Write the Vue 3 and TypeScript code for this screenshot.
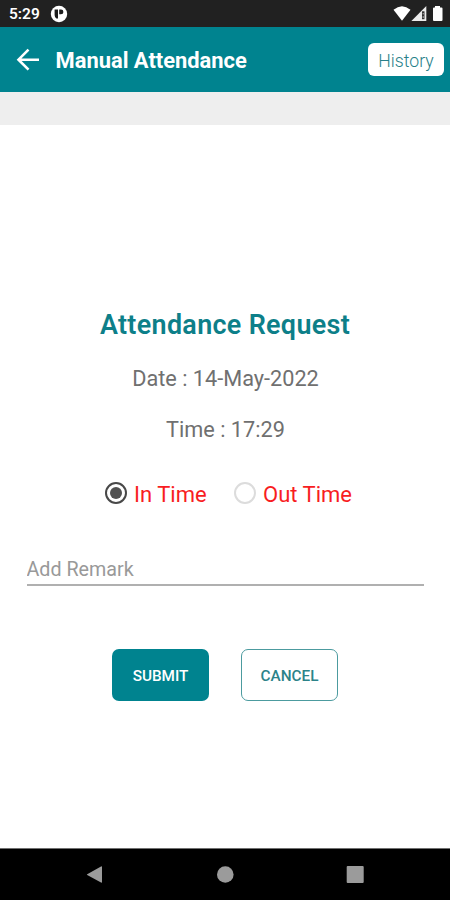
<script setup lang="ts">
import { ref } from 'vue'

type Kind = 'in' | 'out'

const selected = ref<Kind>('in')
const remark = ref<string>('')
const options: { value: Kind; label: string }[] = [
  { value: 'in', label: 'In Time' },
  { value: 'out', label: 'Out Time' },
]
</script>

<template>
  <div class="screen">
    <div class="status">
      <span class="clock">5:29</span>
      <svg class="app-mark" width="18" height="18" viewBox="0 0 18 18">
        <circle cx="9" cy="9" r="8.200" fill="#fff" />
        <path d="M4.600 4.500h3.400v9H6.400Q4.600 12 4.600 10z M9.200 4.500h1.800a2.400 2.400 0 0 1 0 4.800H9.200z" fill="#1c1c1c" />
      </svg>
      <svg class="signals" width="52" height="18" viewBox="0 0 52 18">
        <path d="M.5 4.800Q9 -2.200 17.500 4.800L9 15.800Z" fill="#fff" />
        <path d="M33.300 1V16H18.400Z" fill="#ececec" />
        <path d="M29 6.300h2.500v7.900H29z" fill="#333" />
        <path d="M30.200 8v1.400M30.200 11.200v1.700" stroke="#ddd" stroke-width=".8" />
        <path d="M42 1h5v1.500h1.500q1 0 1 1V15q0 1-1 1h-7.500q-1 0-1-1V3.500q0-1 1-1H42z" fill="#fff" />
      </svg>
    </div>

    <header class="toolbar">
      <svg class="back" width="24" height="24" viewBox="0 0 24 24" fill="none" stroke="#fff" stroke-width="2.600">
        <path d="M23 11.700H2.500M12.500 1.700L2.500 11.700l10 10" />
      </svg>
      <h1>Manual Attendance</h1>
      <button class="history" type="button">History</button>
    </header>
    <div class="strip"></div>

    <main>
      <h2>Attendance Request</h2>
      <p class="date">Date : 14-May-2022</p>
      <p class="time">Time : 17:29</p>

      <div class="radios" role="radiogroup">
        <div
          v-for="o in options"
          :key="o.value"
          class="option"
          role="radio"
          :aria-checked="selected === o.value"
          @click="selected = o.value"
        >
          <span class="ring" :class="{ on: selected === o.value }"></span>
          <span :class="['label', o.value]">{{ o.label }}</span>
        </div>
      </div>

      <input v-model="remark" class="remark" type="text" placeholder="Add Remark" />

      <div class="actions">
        <button class="submit" type="button"><span>SUBMIT</span></button>
        <button class="cancel" type="button"><span>CANCEL</span></button>
      </div>
    </main>

    <nav>
      <svg width="18" height="20" viewBox="0 0 18 20"><path d="M1.200 9.200L15 1.500q1-.5 1 .6v14.800q0 1.100-1 .6L1.200 10.100q-.7-.45 0-.9z" fill="#9b9b9b" /></svg>
      <svg width="18" height="20" viewBox="0 0 18 20"><circle cx="9.300" cy="9.500" r="8.300" fill="#9b9b9b" /></svg>
      <svg width="18" height="20" viewBox="0 0 18 20"><rect x=".7" y="1" width="17" height="17" rx="1" fill="#9b9b9b" /></svg>
    </nav>
  </div>
</template>

<style>
body {
  margin: 0;
}
</style>

<style scoped>
.screen {
  width: 450px;
  height: 900px;
  display: flex;
  flex-direction: column;
  background: #fff;
  font-family: Roboto, "Liberation Sans", sans-serif;
  overflow: hidden;
}
.status {
  height: 27px;
  flex: none;
  display: flex;
  align-items: center;
  box-sizing: border-box;
  padding: 1px 0 0 9px;
  background: #212121;
  color: #fff;
}
.clock {
  width: 41px;
  font-size: 15.500px;
  font-weight: 600;
  line-height: 20px;
}
.signals {
  margin-left: auto;
  margin-right: 5px;
}
.toolbar {
  height: 65px;
  flex: none;
  display: flex;
  align-items: center;
  box-sizing: border-box;
  padding: 0 6px 0 16px;
  background: #00838f;
}
h1 {
  margin: 2px 0 0 15.500px;
  color: #fff;
  font-size: 21.900px;
  line-height: 28px;
  font-weight: 700;
  white-space: nowrap;
}
button {
  box-sizing: border-box;
  padding: 0;
  border: 0;
  font-family: inherit;
}
.history {
  width: 76px;
  height: 33px;
  margin-left: auto;
  border-radius: 6px;
  background: #fff;
  color: #287f89;
  font-size: 17.700px;
  font-weight: 300;
  padding-top: 2px;
}
.strip {
  height: 33px;
  flex: none;
  background: #eee;
}
main {
  flex: 1;
  min-height: 0;
  display: flex;
  flex-direction: column;
  align-items: center;
}
h2 {
  margin: 184px 0 0;
  color: #0d7f89;
  font-size: 26.900px;
  line-height: 32px;
  font-weight: 600;
  letter-spacing: 0.330px;
}
p {
  margin: 0 0 0 1px;
  color: #707070;
  font-size: 21.700px;
  line-height: 26px;
  font-weight: 400;
}
.date {
  margin-top: 25px;
}
.time {
  margin-top: 25px;
}
.radios {
  width: 247px;
  margin-top: 38px;
  margin-left: 7px;
  height: 26px;
  display: flex;
  justify-content: space-between;
}
.option {
  display: flex;
  align-items: center;
  gap: 7px;
}
.ring {
  width: 22px;
  height: 22px;
  box-sizing: border-box;
  display: flex;
  align-items: center;
  justify-content: center;
  border: 2px solid #dcdcdc;
  border-radius: 50%;
  margin-bottom: 2px;
}
.ring.on {
  border-color: #484848;
}
.ring.on::after {
  content: "";
  width: 12px;
  height: 12px;
  border-radius: 50%;
  background: #505050;
}
.label {
  color: #f81d22;
  font-size: 22px;
  line-height: 26px;
  padding-top: 2px;
}
.remark {
  box-sizing: border-box;
  width: 397px;
  height: 40px;
  margin-top: 39px;
  padding: 8px 0 0;
  border: 0;
  border-bottom: 2px solid #b0b0b0;
  outline: 0;
  background: transparent;
  font-family: inherit;
  font-size: 19.700px;
  color: #555;
}
.remark::placeholder {
  color: #999;
  opacity: 1;
}
.actions {
  display: flex;
  gap: 32px;
  margin-top: 63px;
}
.actions button {
  width: 97px;
  height: 52px;
  border-radius: 7px;
  font-size: 15.300px;
  font-weight: 500;
  padding-top: 1px;
}
.actions .submit {
  background: #00838f;
  color: #fff;
}
.actions .cancel {
  background: #fff;
  border: 1px solid #4c9b9f;
  color: #2c8389;
}
nav {
  height: 52px;
  flex: none;
  box-sizing: border-box;
  display: flex;
  justify-content: space-between;
  align-items: center;
  padding: 0 86px;
  border-top: 1px solid #707070;
  background: #000;
}
</style>
